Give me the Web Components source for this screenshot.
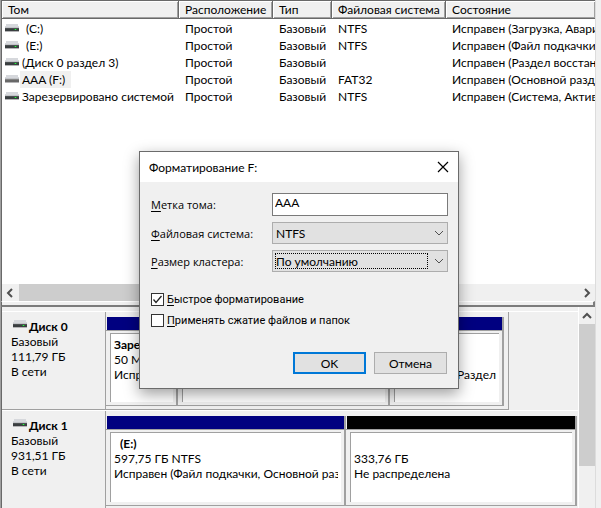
<!DOCTYPE html>
<html lang="ru">
<head>
<meta charset="utf-8">
<title>Управление дисками</title>
<style>
html, body { height: 100%; }
body {
  margin: 0; overflow: hidden; background: #f0f0f0; color: #000;
  font: 12px/15px Lato, "Open Sans", sans-serif;
}
</style>
</head>
<body>
<disk-console>
  <volume-list slot="volumes"></volume-list>
  <disk-row slot="disks" name="Диск 0" kind="Базовый" size="111,79 ГБ" state="В сети" frame style="--map: 403px">
    <disk-partition style="--w: 72fr" name="Заре" size="50 М" state="Испр"></disk-partition>
    <disk-partition style="--w: 212fr"></disk-partition>
    <disk-partition style="--w: 114fr" end state="Раздел"></disk-partition>
  </disk-row>
  <disk-row slot="disks" name="Диск 1" kind="Базовый" size="931,51 ГБ" state="В сети" style="--map: 471px">
    <disk-partition style="--w: 240fr" name="(E:)" indent size="597,75 ГБ NTFS" state="Исправен (Файл подкачки, Основной раз"></disk-partition>
    <disk-partition style="--w: 231fr; --stripe: #000" size="333,76 ГБ" state="Не распределена"></disk-partition>
  </disk-row>
  <format-dialog slot="dialog"></format-dialog>
</disk-console>

<script>
class Base extends HTMLElement {
  connectedCallback() {
    if (!this.shadowRoot) this.attachShadow({ mode: "open" }).innerHTML = this.view();
  }
  get(name) { return this.getAttribute(name) || ""; }
}

customElements.define("drive-icon", class extends Base {
  view() {
    const led = !this.hasAttribute("removable");
    return `<style>:host{display:inline-block;width:14px;height:10px;flex:none}svg{display:block}</style>
    <svg width="14" height="10" viewBox="0 0 14 10" shape-rendering="crispEdges" aria-hidden="true">
      <path d="M1 0H13V2H14V4H0V2H1Z" fill="#d6d8dc"/>
      <path d="M0 3H14V4H0Z" fill="#c2c4c8"/>
      <path d="M0 4H14V7H0Z" fill="${led ? "#3a3e40" : "#686868"}"/>
      <path d="M0 4H14V5H0Z" fill="${led ? "#4c5052" : "#858585"}"/>
      <path d="M0 7H14V8H0Z" fill="#b4b4b6"/>
      ${led ? '<path d="M9 5H12V6H9Z" fill="#1d8a2b"/><path d="M10 5H11V6H10Z" fill="#2ff04a"/>' : ""}
    </svg>`;
  }
});

customElements.define("arrow-glyph", class extends Base {
  view() {
    const d = {
      left: "M6 1L2 5L6 9", right: "M3 1L7 5L3 9", up: "M1 7L5 3L9 7", down: "M1 3L5 7L9 3"
    }[this.get("dir")];
    const w = this.hasAttribute("thin") ? 1 : 2;
    return `<style>:host{display:block;width:10px;height:10px}svg{display:block}</style>
    <svg width="10" height="10" viewBox="0 0 10 10" fill="none" stroke="#505050" stroke-width="${w}" aria-hidden="true"><path d="${d}"/></svg>`;
  }
});

customElements.define("scroll-bar", class extends Base {
  view() {
    const v = this.hasAttribute("vertical");
    return `<style>
      :host{display:flex;flex-direction:${v ? "column" : "row"};background:#f0f0f0;${v ? "width:16px" : "height:17px"}}
      button{all:unset;display:grid;place-items:center;flex:none;width:${v ? 16 : 17}px;height:17px}
      .track{flex:1;display:flex;flex-direction:inherit}
      .thumb{background:#cdcdcd;flex:0 0 var(--thumb,50%)}
    </style>
    <button type="button" aria-label="Назад"><arrow-glyph dir="${v ? "up" : "left"}"></arrow-glyph></button>
    <div class="track"><div class="thumb"></div></div>
    ${v ? "" : '<button type="button" aria-label="Вперёд"><arrow-glyph dir="right"></arrow-glyph></button>'}`;
  }
});

customElements.define("volume-list", class extends Base {
  view() {
    const rows = [
      ["(C:)", "NTFS", "Исправен (Загрузка, Авари", "pad"],
      ["(E:)", "NTFS", "Исправен (Файл подкачки", "pad"],
      ["(Диск 0 раздел 3)", "", "Исправен (Раздел восстан", ""],
      ["AAA (F:)", "FAT32", "Исправен (Основной разд", "sel"],
      ["Зарезервировано системой", "NTFS", "Исправен (Система, Актив", ""]
    ];
    return `<style>
      :host{display:flex;flex-direction:column;background:#fff;height:301px;border-top:1px solid #696969;box-sizing:border-box}
      .list{flex:1;overflow:hidden}
      table{table-layout:fixed;width:100%;border-collapse:separate;border-spacing:0}
      th,td{padding:0 0 0 6px;white-space:nowrap;overflow:hidden;text-align:left;font-weight:400;height:17px;line-height:17px}
      th{height:17px;background:#f0f0f0;border-right:1px solid #696969;border-bottom:1px solid #696969;box-shadow:inset 1px 1px #fff,inset -1px -1px #a0a0a0}
      th:last-child{border-right:0}
      td:first-child{padding-left:3px}
      tbody::before{content:"";display:block;height:1px}
      .name{display:flex;align-items:center}
      .name span{padding:0 1px 0 3px}
      .name.pad span{padding-left:7px}
      .name.sel span{background:#f0f0f0;padding-right:6px;margin-left:1px;padding-left:2px}
    </style>
    <div class="list"><table>
      <colgroup><col style="width:177px"><col style="width:94px"><col style="width:59px"><col style="width:114px"><col></colgroup>
      <thead><tr><th>Том</th><th>Расположение</th><th>Тип</th><th>Файловая система</th><th>Состояние</th></tr></thead>
      <tbody>${rows.map(r => `<tr><td><div class="name ${r[3]}"><drive-icon ${r[3] === "sel" ? "removable" : ""}></drive-icon><span>${r[0]}</span></div></td><td>Простой</td><td>Базовый</td><td>${r[1]}</td><td>${r[2]}</td></tr>`).join("")}</tbody>
    </table></div>
    <scroll-bar style="--thumb:75%"></scroll-bar>`;
  }
});

customElements.define("disk-partition", class extends Base {
  view() {
    return `<style>
      :host{display:flex;flex-direction:column;min-width:0;border-right:2px solid #a0a0a0;border-bottom:1px solid #a0a0a0}
      .stripe{height:13px;margin-left:1px;background:var(--stripe,#000080)}
      .line{height:1px;background:#a0a0a0}
      .body{flex:1;margin:2px 3px 3px 4px;padding:3px 0 0 3px;background:#fff;border:solid #a0a0a0;border-width:1px 0 0 1px;overflow:hidden;white-space:nowrap}
      p,h3{margin:0;font-size:12px;line-height:15px;height:15px;margin-right:3px;overflow:hidden}
      h3{text-indent:${this.hasAttribute("indent") ? 6 : 0}px}
      :host([end]) p{text-align:right}
    </style>
    <div class="stripe"></div><div class="line"></div>
    <div class="body"><h3>${this.get("name")}</h3><p>${this.get("size")}</p><p>${this.get("state")}</p></div>`;
  }
});

customElements.define("disk-row", class extends Base {
  view() {
    return `<style>
      :host{display:flex;height:99px;box-sizing:border-box;border-top:1px solid #fff}
      .info{flex:0 0 104px;box-sizing:border-box;padding:7px 0 0 9px;border-right:1px solid #a0a0a0;border-bottom:1px solid #a0a0a0}
      h2{margin:0;font-size:12px;line-height:15px;display:flex;gap:2px;padding-left:2px}
      h2 drive-icon{margin-top:1px}
      p{margin:0}
      .map{flex:0 1 var(--map);box-sizing:border-box;padding:5px 0 3px;min-width:0;display:flex;
        ${this.hasAttribute("frame") ? "border-right:1px solid #a0a0a0;border-bottom:1px solid #a0a0a0;padding-right:4px;" : ""}}
      .parts{flex:1;display:grid;grid-auto-flow:column;grid-template-columns:${[...this.children].map(c => `minmax(0,${c.style.getPropertyValue("--w").trim()})`).join(" ")}}
    </style>
    <div class="info"><h2><drive-icon></drive-icon><span>${this.get("name")}</span></h2><p>${this.get("kind")}</p><p>${this.get("size")}</p><p>${this.get("state")}</p></div>
    <div class="map"><div class="parts"><slot></slot></div></div>`;
  }
});

customElements.define("disk-console", class extends Base {
  view() {
    return `<style>
      :host{display:flex;flex-direction:column;height:100%;box-sizing:border-box;margin-right:5px;border-left:1px solid #a0a0a0;border-right:1px solid #dcdcdc;position:relative}
      .pane{border-left:1px solid #696969}
      .split{height:6px;box-sizing:border-box;border-top:1px solid #fff;border-bottom:2px solid #7c7c7c;border-right:2px solid #7c7c7c}
      .lower{flex:1;display:flex;min-height:0}
      .disks{flex:1;min-width:0;padding-top:4px;overflow:hidden}
      scroll-bar{flex:none;border-left:1px solid #fff;--thumb:77%}
    </style>
    <div class="pane"><slot name="volumes"></slot></div>
    <div class="pane split"></div>
    <div class="pane lower"><div class="disks"><slot name="disks"></slot></div><scroll-bar vertical></scroll-bar></div>
    <slot name="dialog"></slot>`;
  }
});

customElements.define("format-dialog", class extends Base {
  view() {
    return `<style>
      :host{position:absolute;left:138px;top:151px;width:320px;box-sizing:border-box;border:1px solid #6b6b6b;background:#f0f0f0;box-shadow:0 5px 14px rgba(0,0,0,.38)}
      header{display:flex;align-items:center;justify-content:space-between;height:30px;background:#fff;padding:0 9px 0 9px}
      h1{margin:0;font-size:12px;font-weight:400}
      .close{all:unset;width:12px;height:14px;display:grid;place-items:center}
      form{padding:11px 10px 14px 11px}
      .fields{display:grid;grid-template-columns:121px 1fr;align-items:center;row-gap:6px}
      .fields label{font:11px/15px "Open Sans",sans-serif}
      .check label{font:11px/15px Roboto,sans-serif}
      u{text-underline-offset:2px}
      input,select,button{font:inherit;color:inherit;box-sizing:border-box;margin:0}
      .text{height:23px;width:100%;border:1px solid #7a7a7a;background:#fff;padding:0 2px 4px;outline:0;border-radius:0}
      .pick{position:relative;height:22px}
      select{appearance:none;width:100%;height:100%;border:1px solid #adadad;border-radius:0;background:#e1e1e1;padding:0 24px 0 3px;outline:0}
      .pick arrow-glyph{position:absolute;right:4px;top:6px;pointer-events:none}
      .focus::after{content:"";position:absolute;inset:3px 20px 3px 3px;border:1px dotted #000;pointer-events:none}
      .checks{display:grid;gap:8px;margin-top:20px}
      .check{display:grid;grid-template-columns:13px 1fr;column-gap:3px;align-items:center;height:13px}
      .check input{appearance:none;width:13px;height:13px;border:1px solid #333;background:#fff;grid-area:1/1}
      .check svg{grid-area:1/1;pointer-events:none;z-index:1}
      .actions{display:flex;justify-content:flex-end;gap:8px;margin-top:26px;padding-right:1px}
      .actions button{width:73px;height:22px;border:1px solid #adadad;background:#e1e1e1;padding:0;border-radius:0}
      .actions .main{border:2px solid #0078d7}
    </style>
    <header><h1>Форматирование F:</h1><button class="close" type="button" aria-label="Закрыть"><svg width="12" height="12" viewBox="0 0 12 12" fill="none" stroke="#000" stroke-width="1.2"><path d="M1 1L11 11M11 1L1 11"/></svg></button></header>
    <form>
      <div class="fields">
        <label for="l"><u>М</u>етка тома:</label><input class="text" id="l" type="text" value="AAA">
        <label for="f"><u>Ф</u>айловая система:</label><div class="pick"><select id="f"><option>NTFS</option></select><arrow-glyph dir="down" thin></arrow-glyph></div>
        <label for="s"><u>Р</u>азмер кластера:</label><div class="pick focus"><select id="s"><option>По умолчанию</option></select><arrow-glyph dir="down" thin></arrow-glyph></div>
      </div>
      <div class="checks">
        <div class="check"><input id="q" type="checkbox" checked><svg width="13" height="13" fill="none" stroke="#222" stroke-width="1.3"><path d="M2.5 6.5L5 9.5L10.5 3"/></svg><label for="q"><u>Б</u>ыстрое форматирование</label></div>
        <div class="check"><input id="c" type="checkbox"><label for="c"><u>П</u>рименять сжатие файлов и папок</label></div>
      </div>
      <div class="actions"><button class="main" type="button">OK</button><button type="button">Отмена</button></div>
    </form>`;
  }
});
</script>
</body>
</html>
